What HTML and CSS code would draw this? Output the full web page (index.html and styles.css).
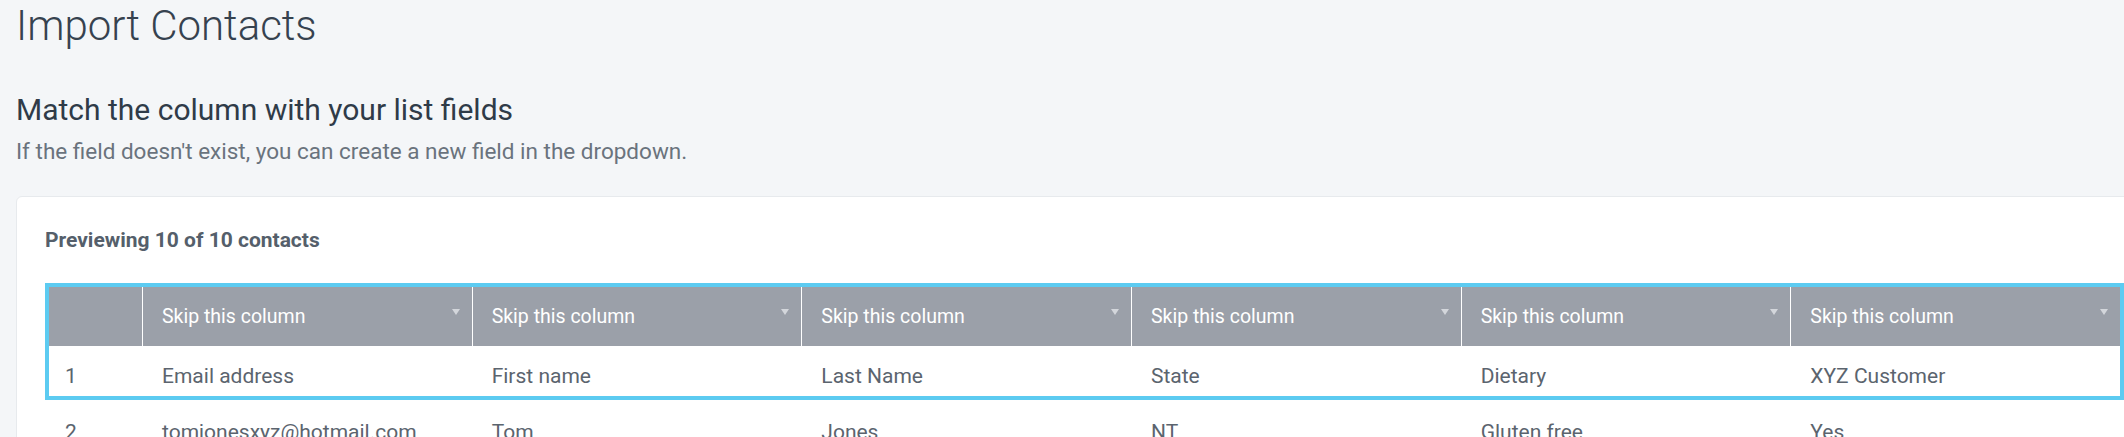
FILE: index.html
```html
<!DOCTYPE html>
<html lang="en">
<head>
<meta charset="utf-8">
<title>Import Contacts</title>
<link rel="stylesheet" href="styles.css">
</head>
<body>
<main class="page">
  <h1 class="title">Import Contacts</h1>
  <h2 class="subtitle">Match the column with your list fields</h2>
  <p class="desc">If the field doesn't exist, you can create a new field in the dropdown.</p>

  <section class="card">
    <div class="card-head">Previewing 10 of 10 contacts</div>
    <div class="grid">
      <div class="frame">
        <div class="row head">
          <div class="cell num"></div>
          <div class="cell sel">Skip this column<span class="caret"></span></div>
          <div class="cell sel">Skip this column<span class="caret"></span></div>
          <div class="cell sel">Skip this column<span class="caret"></span></div>
          <div class="cell sel">Skip this column<span class="caret"></span></div>
          <div class="cell sel">Skip this column<span class="caret"></span></div>
          <div class="cell sel">Skip this column<span class="caret"></span></div>
        </div>
        <div class="row body">
          <div class="cell num">1</div>
          <div class="cell">Email address</div>
          <div class="cell">First name</div>
          <div class="cell">Last Name</div>
          <div class="cell">State</div>
          <div class="cell">Dietary</div>
          <div class="cell">XYZ Customer</div>
        </div>
      </div>
      <div class="row body plain">
        <div class="cell num">2</div>
        <div class="cell">tomjonesxyz@hotmail.com</div>
        <div class="cell">Tom</div>
        <div class="cell">Jones</div>
        <div class="cell">NT</div>
        <div class="cell">Gluten free</div>
        <div class="cell">Yes</div>
      </div>
      <div class="row body plain">
        <div class="cell num">3</div>
        <div class="cell">sarah.smith@example.com</div>
        <div class="cell">Sarah</div>
        <div class="cell">Smith</div>
        <div class="cell">NSW</div>
        <div class="cell">Vegetarian</div>
        <div class="cell">No</div>
      </div>
    </div>
  </section>
</main>
</body>
</html>
```

FILE: styles.css
```css
html, body {
  margin: 0;
  padding: 0;
  background: #f4f6f8;
  overflow: hidden;
}

body {
  font-family: Roboto, "Liberation Sans", sans-serif;
  color: #34404d;
}

.page {
  padding: 2px 0 0 16px;
  width: 2200px;
}

.title {
  margin: 0;
  font-size: 42px;
  line-height: 48px;
  font-weight: 300;
  color: #36424f;
}

.subtitle {
  margin: 42px 0 0;
  font-size: 30px;
  line-height: 36px;
  font-weight: 400;
  color: #2f3b48;
}

.desc {
  margin: 9px 0 0;
  font-size: 22.5px;
  line-height: 28px;
  color: #6a737d;
}

.card {
  margin-top: 31px;
  background: #ffffff;
  border: 1px solid #e7eaed;
  border-radius: 6px;
  padding: 30px 0 40px 28px;
}

.card-head {
  font-size: 21px;
  line-height: 26px;
  font-weight: 700;
  color: #555f6b;
}

.grid {
  margin-top: 30px;
  width: 2079px;
}

.frame {
  border: 4px solid #5ccbf1;
}

.row {
  display: grid;
  grid-template-columns: 93px repeat(6, 1fr);
  height: 50px;
  font-size: 21px;
  color: #5b646e;
}

.row.plain {
  padding: 0 4px;
  height: 52px;
}

.row.body .cell {
  padding-top: 9px;
}

.row.plain .cell {
  padding-top: 12px;
}

.row.head {
  height: 59px;
  background: #9ba0a9;
  color: #ffffff;
  font-size: 19.5px;
}

.cell {
  display: flex;
  align-items: center;
  padding-left: 20px;
  white-space: nowrap;
  overflow: hidden;
}

.cell.num {
  padding-left: 16px;
}

.head .cell + .cell {
  border-left: 1px solid #ffffff;
  padding-left: 19px;
}

.cell.sel {
  justify-content: space-between;
  padding-right: 12px;
}

.caret {
  width: 0;
  height: 0;
  border-left: 4px solid transparent;
  border-right: 4px solid transparent;
  border-top: 6px solid #d3d6db;
  margin-top: -9px;
}
```
